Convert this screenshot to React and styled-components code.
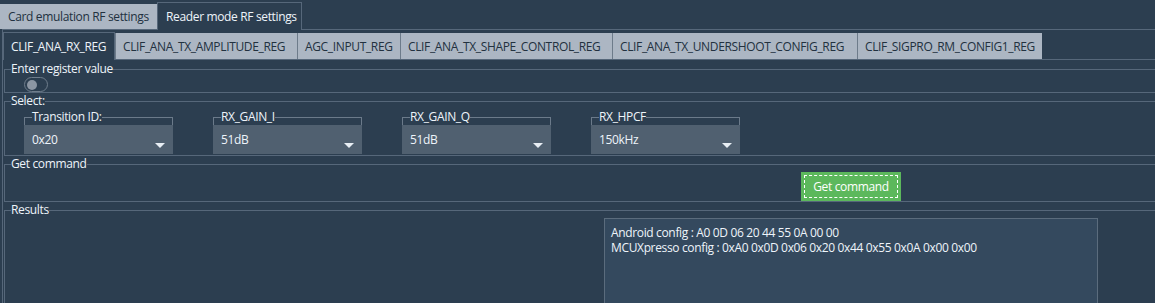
import React from "react";
import styled, { createGlobalStyle } from "styled-components";

const GlobalStyle = createGlobalStyle`
  html, body {
    margin: 0;
    padding: 0;
    background: #2c3e50;
  }
  body {
    font-family: "Open Sans", "Noto Sans", sans-serif;
    font-size: 12px;
    letter-spacing: -0.35px;
  }
  button {
    letter-spacing: inherit;
  }
`;

const LINE = "#56677a";
const TAB_BG = "#acb6c3";
const TEXT = "#eef4fa";

const Page = styled.div`
  width: 1155px;
  height: 303px;
  overflow: hidden;
  background: #2c3e50;
  color: ${TEXT};
`;

const TabBar = styled.div`
  display: flex;
  align-items: flex-end;
  height: ${(p) => p.height}px;
  box-sizing: border-box;
  position: relative;
  z-index: 1;
`;

const Tab = styled.div`
  box-sizing: border-box;
  width: ${(p) => p.width}px;
  display: flex;
  align-items: center;
  padding-left: ${(p) => p.pad || 8}px;
  white-space: nowrap;
  ${(p) =>
    p.active
      ? `
    height: ${p.tall}px;
    margin-bottom: -1px;
    background: #2c3e50;
    color: ${TEXT};
    border: 1px solid ${LINE};
    border-bottom: none;
  `
      : `
    height: ${p.short}px;
    background: ${TAB_BG};
    color: #22313f;
    border-left: 1px solid #6d7b8a;
  `}
  &:first-child {
    border-left: ${(p) => (p.active ? `1px solid ${LINE}` : "none")};
  }
`;

const Pane = styled.div`
  border-top: 1px solid ${LINE};
  border-left: ${(p) => (p.side ? `1px solid ${LINE}` : "none")};
  margin-left: ${(p) => p.inset || 0}px;
  padding: ${(p) => p.pad || "0"};
  width: 1400px;
`;

const Group = styled.fieldset`
  display: block;
  margin: 0;
  padding: 0;
  border: 1px solid ${LINE};
  min-width: 0;
`;

const Legend = styled.legend`
  padding: 0;
  margin-left: 6px;
  line-height: 16px;
  font-size: 12px;
  color: ${TEXT};
`;

const GroupBody = styled.div`
  display: flex;
  align-items: ${(p) => p.align || "flex-start"};
  gap: ${(p) => p.gap || 0}px;
  height: ${(p) => p.h}px;
  padding-left: ${(p) => p.pad || 0}px;
`;

const Toggle = styled.div`
  box-sizing: border-box;
  width: 24px;
  height: 15px;
  border: 1px solid #6f7d8c;
  border-radius: 8px;
  background: #2c3e50;
  display: flex;
  align-items: center;
  padding-left: 2px;
  &::after {
    content: "";
    width: 10px;
    height: 10px;
    border-radius: 50%;
    background: #8c96a3;
  }
`;

const Combo = styled.fieldset`
  display: block;
  margin: 0;
  padding: 0;
  width: 149px;
  box-sizing: border-box;
  border: 1px solid #6b7a8a;
  border-bottom: none;
  min-width: 0;
`;

const ComboLegend = styled.legend`
  padding: 0;
  margin-left: 7px;
  line-height: 16px;
  color: ${TEXT};
`;

const ComboField = styled.div`
  margin: 0 -1px;
  height: 29px;
  background: #506070;
  display: flex;
  align-items: center;
  justify-content: space-between;
  padding: 0 8px;
  color: ${TEXT};
`;

const Arrow = styled.span`
  width: 0;
  height: 0;
  margin-top: 11px;
  border-left: 5px solid transparent;
  border-right: 5px solid transparent;
  border-top: 5px solid #e8eef4;
`;

const GreenButton = styled.button`
  margin-left: 796px;
  width: 100px;
  height: 29px;
  background: #5cb85c;
  border: none;
  color: #ffffff;
  font-family: inherit;
  font-size: 12px;
  outline: 1px dashed #ffffff;
  outline-offset: -4px;
  padding: 0;
`;

const ResultBox = styled.div`
  margin-left: 599px;
  width: 494px;
  height: 120px;
  box-sizing: border-box;
  background: #34495e;
  border: 1px solid #5b6c7d;
  padding: 6px;
  line-height: 15px;
  color: ${TEXT};
`;

const outerTabs = [
  { label: "Card emulation RF settings", width: 157 },
  { label: "Reader mode RF settings", width: 145, active: true },
];

const innerTabs = [
  { label: "CLIF_ANA_RX_REG", width: 112, active: true },
  { label: "CLIF_ANA_TX_AMPLITUDE_REG", width: 182 },
  { label: "AGC_INPUT_REG", width: 103 },
  { label: "CLIF_ANA_TX_SHAPE_CONTROL_REG", width: 212 },
  { label: "CLIF_ANA_TX_UNDERSHOOT_CONFIG_REG", width: 245 },
  { label: "CLIF_SIGPRO_RM_CONFIG1_REG", width: 185 },
];

const combos = [
  { label: "Transition ID:", value: "0x20" },
  { label: "RX_GAIN_I", value: "51dB" },
  { label: "RX_GAIN_Q", value: "51dB" },
  { label: "RX_HPCF", value: "150kHz" },
];

export default function App() {
  return (
    <Page>
      <GlobalStyle />
      <TabBar height={29}>
        {outerTabs.map((t) => (
          <Tab key={t.label} {...t} tall={28} short={25}>
            {t.label}
          </Tab>
        ))}
      </TabBar>
      <Pane side inset={2}>
        <TabBar height={29}>
          {innerTabs.map((t) => (
            <Tab key={t.label} {...t} tall={28} short={26} pad={7}>
              {t.label}
            </Tab>
          ))}
        </TabBar>
        <Pane pad="1px 0 0 1px">
          <Group>
            <Legend>Enter register value</Legend>
            <GroupBody h={15} pad={19}>
              <Toggle />
            </GroupBody>
          </Group>
          <Group>
            <Legend>Select:</Legend>
            <GroupBody h={46} gap={40} pad={19}>
              {combos.map((c) => (
                <Combo key={c.label}>
                  <ComboLegend>{c.label}</ComboLegend>
                  <ComboField>
                    <span>{c.value}</span>
                    <Arrow />
                  </ComboField>
                </Combo>
              ))}
            </GroupBody>
          </Group>
          <Group>
            <Legend>Get command</Legend>
            <GroupBody h={29}>
              <GreenButton>Get command</GreenButton>
            </GroupBody>
          </Group>
          <Group>
            <Legend>Results</Legend>
            <GroupBody h={120}>
              <ResultBox>
                <div>Android config : A0 0D 06 20 44 55 0A 00 00</div>
                <div>MCUXpresso config : 0xA0 0x0D 0x06 0x20 0x44 0x55 0x0A 0x00 0x00</div>
              </ResultBox>
            </GroupBody>
          </Group>
        </Pane>
      </Pane>
    </Page>
  );
}
